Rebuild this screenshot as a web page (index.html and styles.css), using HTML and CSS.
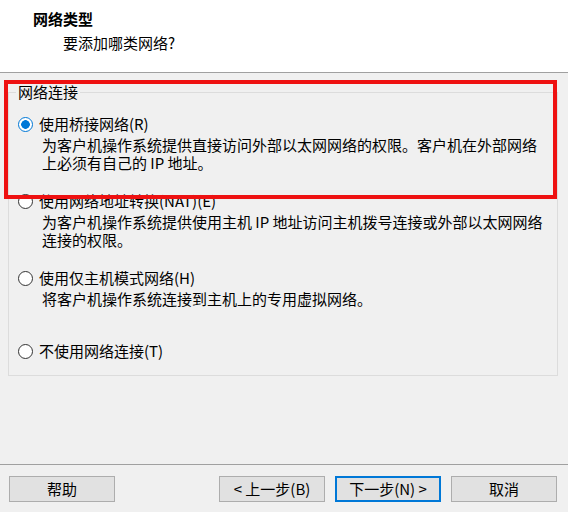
FILE: index.html
```html
<!DOCTYPE html>
<html lang="zh-CN">
<head>
<meta charset="utf-8">
<link rel="stylesheet" href="styles.css">
</head>
<body>
<div class="page">
  <header class="header">
    <div class="title">网络类型</div>
    <div class="subtitle">要添加哪类网络?</div>
  </header>

  <fieldset class="group">
    <legend class="legend">网络连接</legend>

    <div class="option">
      <div class="opt-label"><span class="radio checked"></span>使用桥接网络(R)</div>
      <div class="opt-desc">为客户机操作系统提供直接访问外部以太网网络的权限。客户机在外部网络<br>上必须有自己的 IP 地址。</div>
    </div>

    <div class="option">
      <div class="opt-label"><span class="radio"></span>使用网络地址转换(NAT)(E)</div>
      <div class="opt-desc">为客户机操作系统提供使用主机 IP 地址访问主机拨号连接或外部以太网网络<br>连接的权限。</div>
    </div>

    <div class="option">
      <div class="opt-label"><span class="radio"></span>使用仅主机模式网络(H)</div>
      <div class="opt-desc">将客户机操作系统连接到主机上的专用虚拟网络。</div>
    </div>

    <div class="option last">
      <div class="opt-label"><span class="radio"></span>不使用网络连接(T)</div>
    </div>
  </fieldset>

  <footer class="footer">
    <button class="btn">帮助</button>
    <div class="spacer"></div>
    <button class="btn">&lt; 上一步(B)</button>
    <button class="btn default">下一步(N) &gt;</button>
    <button class="btn">取消</button>
  </footer>

  <div class="highlight"></div>
</div>
</body>
</html>
```

FILE: styles.css
```css
html, body {
  margin: 0;
  padding: 0;
}
body {
  background: #f0f0f0;
  font-family: "Noto Sans CJK SC", "Microsoft YaHei", sans-serif;
  font-size: 15px;
  line-height: 18px;
  color: #000;
}
.page {
  position: relative;
  width: 568px;
  height: 512px;
  display: flex;
  flex-direction: column;
  overflow: hidden;
}
.header {
  background: #fff;
  height: 72px;
  border-bottom: 1px solid #a0a0a0;
  box-sizing: content-box;
  padding: 0;
}
.title {
  font-weight: bold;
  padding: 10px 0 0 33px;
}
.subtitle {
  padding: 6px 0 0 63px;
}
.group {
  margin: 10px 10px 0 8px;
  padding: 14px 0 15px 9px;
  border: 1px solid #dcdcdc;
  min-width: 0;
}
.legend {
  padding: 0 2px;
  margin-left: -2px;
}
.option {
  margin-bottom: 20px;
}
.option.last {
  margin-top: 34px;
  margin-bottom: 0;
}
.opt-label {
  display: flex;
  align-items: center;
  white-space: nowrap;
}
.radio {
  box-sizing: border-box;
  width: 15px;
  height: 15px;
  border: 1px solid #333;
  border-radius: 50%;
  background: #fff;
  margin-right: 6px;
  flex: none;
}
.radio.checked {
  border-color: #0078d7;
  background: radial-gradient(circle, #0078d7 0 4px, #fff 4.6px);
}
.opt-desc {
  margin-top: 3px;
  padding-left: 24px;
  white-space: nowrap;
}
.footer {
  margin-top: auto;
  border-top: 1px solid #a0a0a0;
  display: flex;
  gap: 10px;
  padding: 11px 11px 10px 9px;
}
.spacer {
  flex: 1;
}
.btn {
  width: 106px;
  height: 26px;
  box-sizing: border-box;
  background: #e1e1e1;
  border: 1px solid #adadad;
  font-family: inherit;
  font-size: 15px;
  line-height: 18px;
  color: #000;
  padding: 0;
  margin: 0;
}
.btn.default {
  border: 2px solid #0078d7;
}
.highlight {
  position: absolute;
  left: 4px;
  top: 80px;
  width: 553px;
  height: 119px;
  box-sizing: border-box;
  border: 4px solid #ee1111;
  pointer-events: none;
}
```
